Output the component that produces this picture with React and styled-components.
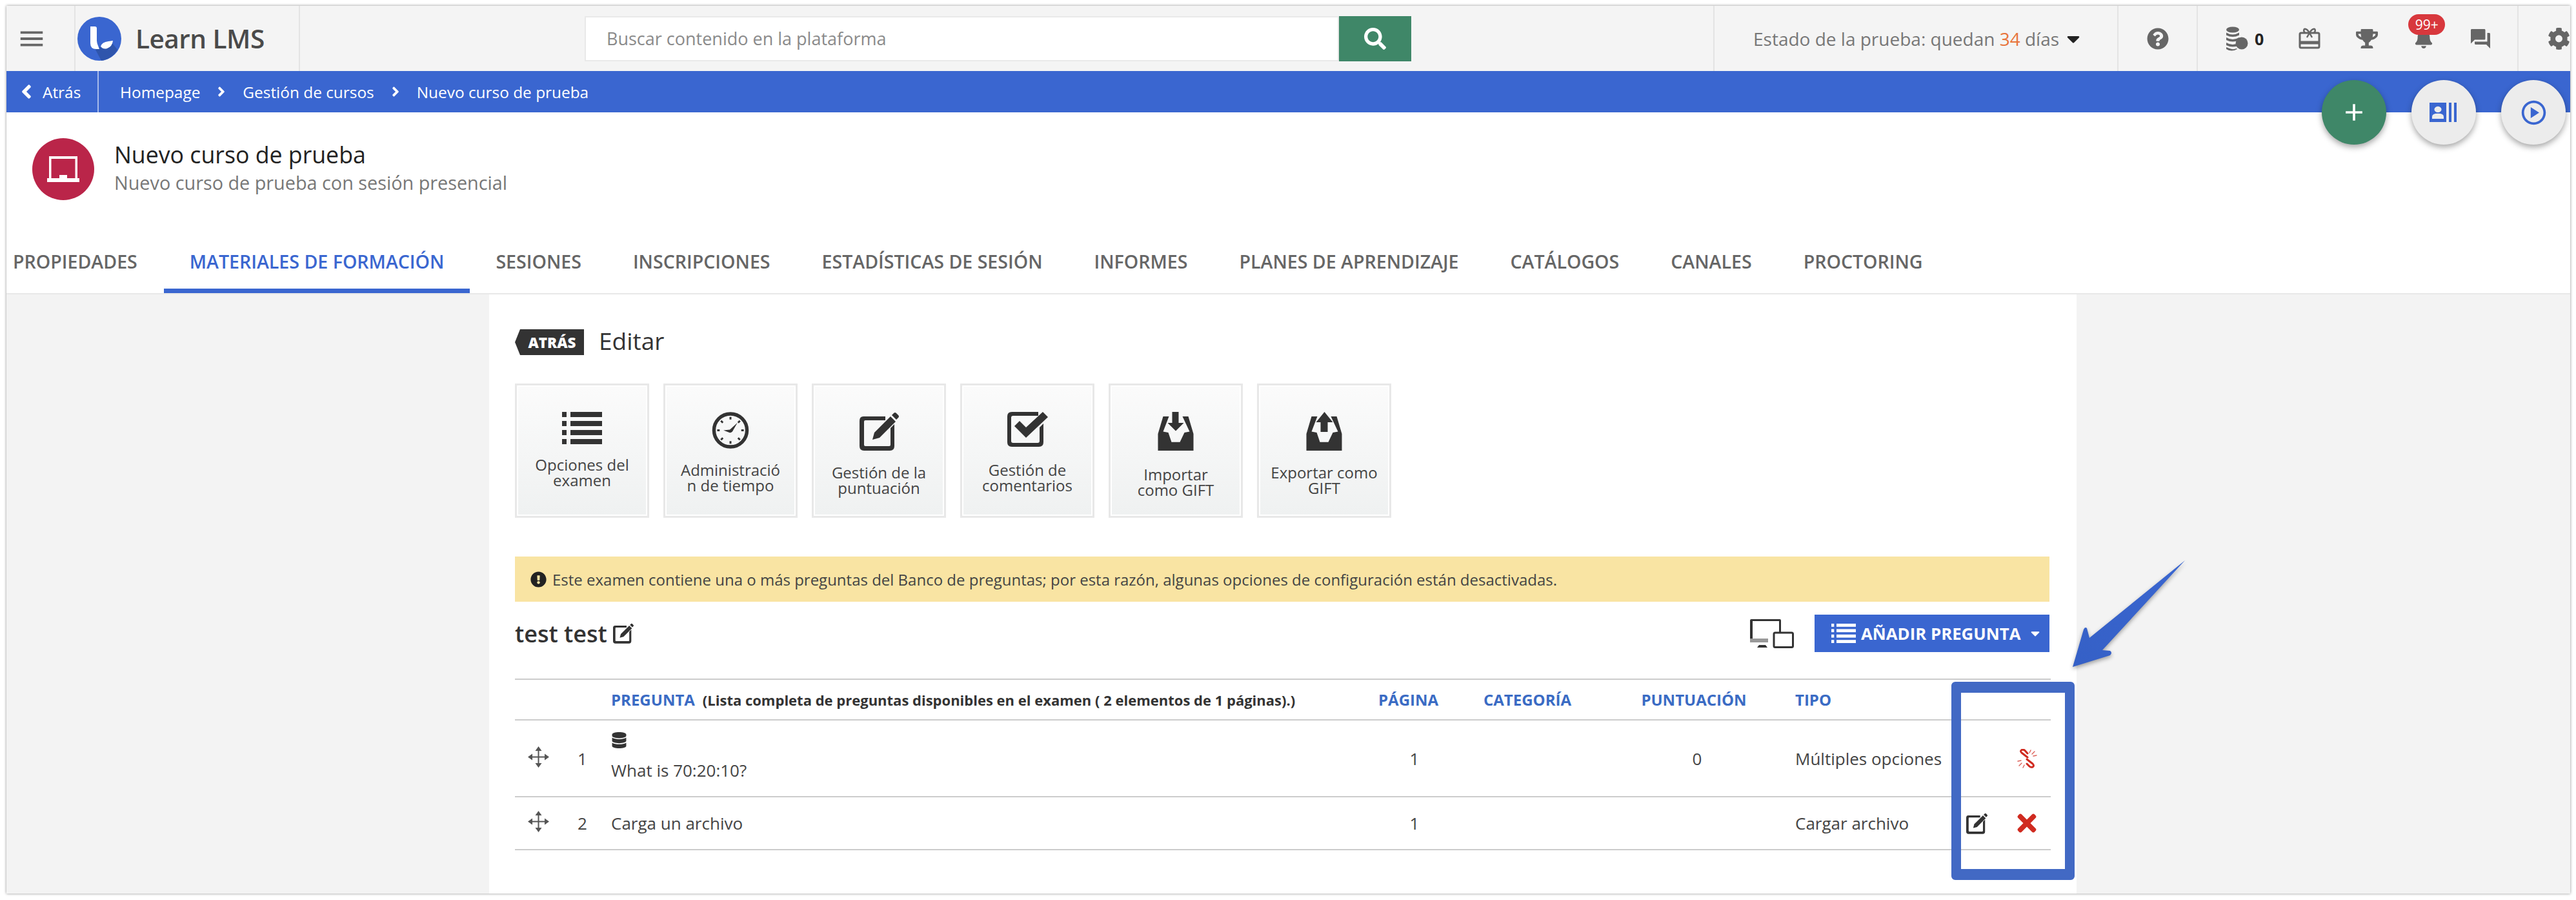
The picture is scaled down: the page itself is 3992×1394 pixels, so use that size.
import React from 'react';
import styled, { createGlobalStyle } from 'styled-components';
import {
  FaAngleLeft, FaAngleRight, FaBell, FaCaretDown, FaCog, FaDatabase,
  FaExclamationCircle, FaQuestionCircle, FaSearch, FaTimes, FaTrophy,
} from 'react-icons/fa';
import { MdAdd, MdForum, MdMenu, MdOutlinePlayCircle } from 'react-icons/md';

const GlobalStyle = createGlobalStyle`
  html, body { margin: 0; padding: 0; background: #fff; }
  body { font-family: "Open Sans", "Liberation Sans", sans-serif; color: #444; }
  * { box-sizing: border-box; }
`;

const Page = styled.div`
  width: 3992px;
  height: 1394px;
  padding: 9px 9px 10px 10px;
  background: #fff;
`;
const Frame = styled.div`
  position: relative;
  height: 100%;
  display: flex;
  flex-direction: column;
  box-shadow: 0 0 4px rgba(0, 0, 0, .45);
  overflow: hidden;
`;

/* top bar */
const TopBar = styled.header`
  height: 101px;
  display: flex;
  background: #f4f4f4;
  flex: none;
`;
const BarCell = styled.div`
  width: ${p => p.$w}px;
  display: flex;
  align-items: center;
  justify-content: ${p => p.$center ? 'center' : 'flex-start'};
  padding-left: ${p => p.$pad || 0}px;
  border-left: ${p => p.$noLine ? 'none' : '2px solid #e4e4e4'};
  color: #666;
  flex: none;
`;
const LogoName = styled.span`
  font-size: 40.5px;
  font-weight: 600;
  color: #4a4a4a;
  margin-left: 21px;
  letter-spacing: -.5px;
  white-space: nowrap;
`;
const SearchWrap = styled.div`
  flex: 1;
  display: flex;
  align-items: center;
  padding-left: 441px;
  border-left: 2px solid #e4e4e4;
`;
const SearchInput = styled.div`
  width: 1169px;
  height: 70px;
  background: #fff;
  border: 2px solid #e9e9e9;
  color: #8a8a8a;
  font-size: 27px;
  display: flex;
  align-items: center;
  padding-left: 32px;
`;
const SearchButton = styled.div`
  width: 112px;
  height: 70px;
  background: #3f8768;
  color: #fff;
  font-size: 34px;
  display: flex;
  align-items: center;
  justify-content: center;
`;
const TrialText = styled.span`
  font-size: 28px;
  color: #777;
  white-space: nowrap;
`;
const Days = styled.span`
  color: #e8743b;
`;
const Caret = styled.span`
  display: inline-flex;
  color: #222;
  font-size: 32px;
  margin-left: 6px;
`;
const ToolIcons = styled.div`
  width: 100%;
  display: flex;
  align-items: center;
`;
const Tool = styled.span`
  position: relative;
  width: ${p => p.$w}px;
  margin-left: ${p => p.$ml || 0}px;
  display: inline-flex;
  justify-content: center;
  font-size: ${p => p.$size || 34}px;
  color: #666;
  flex: none;
`;
const CoinCount = styled.span`
  font-size: 25px;
  font-weight: 700;
  color: #222;
  margin-left: 10px;
`;
const Badge = styled.span`
  position: absolute;
  left: -9px;
  top: -23px;
  width: 57px;
  height: 32px;
  border-radius: 16px;
  background: #d8383d;
  color: #fff;
  font-size: 21px;
  line-height: 32px;
  text-align: center;
`;

/* breadcrumb */
const BlueBar = styled.nav`
  height: 64px;
  flex: none;
  background: #3a66d0;
  color: #fff;
  display: flex;
  align-items: center;
  font-size: 24.4px;
`;
const BackLink = styled.div`
  width: 143px;
  height: 100%;
  padding-left: 14px;
  display: flex;
  align-items: center;
  gap: 8px;
  border-right: 2px solid rgba(255, 255, 255, .55);
  svg { font-size: 34px; }
`;
const Crumbs = styled.div`
  display: flex;
  align-items: center;
  padding-left: 33px;
  gap: 21px;
  svg { font-size: 24px; }
`;

const FabRow = styled.div`
  position: absolute;
  right: 7px;
  top: 115px;
  display: flex;
  gap: 39px;
`;
const Fab = styled.div`
  width: 100px;
  height: 100px;
  border-radius: 50%;
  background: ${p => p.$green ? '#3f8768' : '#ececec'};
  color: ${p => p.$green ? '#fff' : '#3a66d0'};
  display: flex;
  align-items: center;
  justify-content: center;
  font-size: ${p => p.$size || 44}px;
  box-shadow: 0 4px 10px rgba(0, 0, 0, .35);
`;

/* course header */
const CourseHead = styled.div`
  height: 182px;
  flex: none;
  padding: 40px 0 0 40px;
  display: flex;
  align-items: flex-start;
  gap: 31px;
  background: #fff;
`;
const CourseBadge = styled.div`
  width: 96px;
  height: 96px;
  border-radius: 50%;
  background: #ba2549;
  display: flex;
  align-items: center;
  justify-content: center;
`;
const CourseTitle = styled.div`
  font-size: 35.7px;
  line-height: 48px;
  color: #222;
  margin-top: 1px;
`;
const CourseSub = styled.div`
  font-size: 28.8px;
  line-height: 40px;
  color: #777;
`;

const Tabs = styled.div`
  height: 98px;
  flex: none;
  display: flex;
  border-bottom: 2px solid #e8e8e8;
  box-sizing: content-box;
`;
const Tab = styled.div`
  height: 98px;
  padding: 5px ${p => p.$first ? '41px 0 10px' : '40px 0'};
  display: flex;
  align-items: center;
  font-size: 28.55px;
  font-weight: 600;
  white-space: nowrap;
  color: ${p => p.$active ? '#3a66d0' : '#666'};
  border-bottom: 7px solid ${p => p.$active ? '#3a66d0' : 'transparent'};
`;

/* body */
const Body = styled.div`
  flex: 1;
  display: flex;
  justify-content: flex-start;
  background: #f3f3f3;
  padding-left: 748px;
`;
const Panel = styled.main`
  position: relative;
  width: 2460px;
  padding: 54px 40px 0;
  background: #fff;
`;
const EditHead = styled.div`
  height: 40px;
  display: flex;
  align-items: center;
  gap: 23px;
`;
const BackTag = styled.span`
  width: 107px;
  height: 40px;
  background: #333;
  color: #fff;
  font-size: 22.5px;
  font-weight: 800;
  display: flex;
  align-items: center;
  justify-content: center;
  padding-left: 8px;
  clip-path: polygon(8px 0, 100% 0, 100% 100%, 8px 100%, 0 50%);
`;
const EditTitle = styled.span`
  font-size: 37px;
  line-height: 40px;
  margin-top: -5px;
  color: #333;
`;
const Cards = styled.div`
  margin-top: 44px;
  display: flex;
  gap: 22px;
`;
const Card = styled.div`
  width: 208px;
  height: 208px;
  padding-top: 41px;
  border: 3px solid #e8e8e8;
  box-shadow: inset 0 0 0 2px #fff;
  background: linear-gradient(#fbfbfb, #eff1f1);
  display: flex;
  flex-direction: column;
  align-items: center;
`;
const CardLabel = styled.div`
  margin-top: ${p => p.$mt || 20}px;
  font-size: 24px;
  line-height: 24px;
  color: #444;
  text-align: center;
  white-space: pre-line;
`;
const IconSlot = styled.div`
  height: ${p => p.$h}px;
  color: #333;
  display: flex;
  font-size: ${p => p.$h}px;
`;
const Alert = styled.div`
  margin: 60px 2px 0 0;
  height: 70px;
  background: #f9e4a3;
  padding-left: 24px;
  display: flex;
  align-items: center;
  gap: 9px;
  font-size: 24px;
  color: #444;
  white-space: nowrap;
  svg { font-size: 25px; color: #222; }
`;
const Toolbar = styled.div`
  margin: 20px 2px 0 0;
  height: 58px;
  display: flex;
  align-items: center;
`;
const ExamName = styled.span`
  font-size: 36px;
  font-weight: 600;
  color: #333;
`;
const EditSmall = styled.span`
  display: inline-flex;
  margin: 0 0 0 9px;
  color: #333;
`;
const DeviceWrap = styled.span`
  margin-left: auto;
  margin-right: 32px;
  display: inline-flex;
  color: #333;
`;
const AddButton = styled.div`
  width: 364px;
  height: 58px;
  background: #3a66d0;
  color: #fff;
  display: flex;
  align-items: center;
  padding-left: 26px;
  gap: 8px;
  font-size: 25.8px;
  font-weight: 700;
  white-space: nowrap;
`;
const CaretSmall = styled.span`
  display: inline-flex;
  margin-left: 3px;
  font-size: 22px;
`;

const TableWrap = styled.div`
  position: relative;
  margin-top: 41px;
`;
const Table = styled.table`
  width: 2380px;
  table-layout: fixed;
  border-collapse: collapse;
  color: #444;
`;
const HeadCell = styled.th`
  height: 63px;
  padding: 0 ${p => p.$padRight || 0}px 0 ${p => p.$pad || 0}px;
  border-top: 2px solid #ccc;
  border-bottom: 2px solid #ccc;
  text-align: ${p => p.$center ? 'center' : 'left'};
  color: #3a6bc4;
  font-size: 24px;
  font-weight: 700;
  white-space: nowrap;
`;
const HeadNote = styled.span`
  color: #333;
  font-size: 22px;
  margin-left: 12px;
`;
const Row = styled.tr`
  height: ${p => p.$h}px;
  border-bottom: 2px solid #ccc;
`;
const Cell = styled.td`
  padding: 0 0 0 ${p => p.$pad || 0}px;
  text-align: ${p => p.$center ? 'center' : 'left'};
  color: #444;
  font-size: 26px;
  vertical-align: middle;
`;
const DragCell = styled.span`
  display: inline-flex;
  margin: 3px 0 0 20px;
  color: #555;
`;
const QuestionBlock = styled.div`
  padding-bottom: 8px;
  line-height: 28px;
`;
const DbMark = styled.div`
  height: 26px;
  margin-bottom: 19px;
  display: flex;
  color: #333;
  font-size: 25px;
`;
const Actions = styled.div`
  display: flex;
  justify-content: flex-end;
  align-items: center;
  gap: 40px;
  padding-right: ${p => p.$right || 16}px;
`;
const ActionIcon = styled.span`
  display: inline-flex;
  color: ${p => p.$red ? '#d02b20' : '#333'};
  font-size: ${p => p.$size || 32}px;
`;

/* annotation overlays */
const Highlight = styled.div`
  position: absolute;
  left: 2226px;
  top: 5px;
  width: 191px;
  height: 307px;
  border: solid #4269c4;
  border-width: 17px 15px;
  border-radius: 6px;
  pointer-events: none;
`;
const ArrowMark = styled.svg`
  position: absolute;
  left: 2400px;
  top: -190px;
  width: 200px;
  height: 180px;
  overflow: visible;
`;

const Logo = () => (
  <svg width="70" height="70" viewBox="0 0 70 70">
    <circle cx="35" cy="35" r="34" fill="#3a66d0" />
    <path d="M29 52 L52 38 L63 52 A34 34 0 0 1 38 69 Z" fill="#2f55ac" />
    <path d="M21 16 h7 q3 0 3 3 v19 q0 3 2 8 l2 5 h-5 q-9 0-9-9 V16z" fill="#fff" />
    <path d="M37 47 q2-7 12-8 l7-1 q-1 9-9 12 q-6 2-10-3z" fill="#fff" />
  </svg>
);

const Screen = () => (
  <svg width="50" height="40" viewBox="0 0 50 40" fill="#fff">
    <path d="M3 0 h44 v34 h-3.5 V4 H6.5 v30 H3z" />
    <path d="M19 29 h12 v5 h19 v6 H0 v-6 h19z" />
  </svg>
);

const CoinsIcon = () => (
  <svg width="36" height="38" viewBox="0 0 36 38" fill="currentColor">
    <ellipse cx="12" cy="5" rx="10" ry="4.5" />
    <path d="M2 9.5 q10 6 20 0 v4 q-10 5-20 0z" />
    <path d="M2 17 q10 6 20 0 v4 q-10 5-20 0z" />
    <path d="M2 25 q10 6 20 0 v4 q-10 5-20 0z" />
    <path d="M2 32 q10 5 16 2 l1 1 q-9 5-17 0z" />
    <circle cx="26" cy="26" r="9.5" />
  </svg>
);

const GiftIcon = () => (
  <svg width="34" height="33" viewBox="0 0 34 33" fill="none" stroke="currentColor">
    <rect x="2" y="8" width="30" height="23" rx="2" strokeWidth="3" />
    <path d="M2 23 h30" strokeWidth="5" />
    <path d="M17 8 q-4-7-8-6 q-2 3 1 6 M17 8 q4-7 8-6 q2 3-1 6" strokeWidth="2.5" />
    <path d="M17 8 l-4 7 M17 8 l4 7" strokeWidth="2.5" />
  </svg>
);

const ContactsIcon = () => (
  <svg width="44" height="30" viewBox="0 0 44 36" preserveAspectRatio="none" fill="currentColor">
    <path d="M0 0 h26 v36 H0z M13 7 a5.5 5.5 0 1 0 .01 0z M4 30 h18 v-4 q0-6-9-6 t-9 6z" fillRule="evenodd" />
    <path d="M30 0 h4 v36 h-4z M38 0 h4 v36 h-4z" />
  </svg>
);

const ListIcon = ({ w, h }) => (
  <svg width={w} height={h} viewBox="0 0 62 50" preserveAspectRatio="none" fill="currentColor">
    {[0, 14, 28, 42].map(y => (
      <g key={y}>
        <rect x="0" y={y} width="7" height="8" />
        <rect x="13" y={y} width="49" height="8" />
      </g>
    ))}
  </svg>
);

const ClockIcon = () => (
  <svg width="58" height="57" viewBox="0 0 58 58" fill="none" stroke="currentColor">
    <circle cx="29" cy="29" r="26" strokeWidth="5.5" />
    <path d="M29 8v4 M29 46v4 M8 29h4 M46 29h4 M14 14l3 3 M44 14l-3 3 M14 44l3-3 M44 44l-3-3" strokeWidth="3" />
    <path d="M18 29 l10-1 l12-11 l-8 14 q-3 3-6 1z" fill="currentColor" stroke="none" />
  </svg>
);

const EditIcon = ({ w = 61, h = 60 }) => (
  <svg width={w} height={h} viewBox="0 0 61 60" fill="currentColor">
    <path d="M6 6 h34 v6 H9 q-2 0-2 2 v36 q0 2 2 2 h37 q2 0 2-2 V24 l6-6 v34 q0 7-7 7 H7 q-7 0-7-7 V13 q0-7 6-7z" transform="translate(0 1)" />
    <path d="M20 43 l3-11 L48 7 l8 8 L31 40z" />
    <path d="M50 5 l3-3 q2-2 4 0 l3 3 q2 2 0 4 l-3 3z" />
  </svg>
);

const CheckIcon = () => (
  <svg width="63" height="54" viewBox="0 0 63 54" fill="currentColor">
    <path d="M7 0 h41 v6 H9 q-3 0-3 3 v36 q0 3 3 3 h38 q3 0 3-3 V24 l6-6 v29 q0 7-7 7 H7 q-7 0-7-7 V7 q0-7 7-7z" />
    <path d="M11 22 l8-8 l10 10 L55 0 l8 8 L29 40z" />
  </svg>
);

const TrayIcon = ({ up }) => (
  <svg width="56" height="60" viewBox="0 0 55 60" fill="currentColor">
    <path d="M8 7 h9 L8 30.5 l8 1.5 l5 14.7 h13 l7-14.7 l8-1.5 L38 7 h9 l8 27 v26 H0 V34z" />
    {up
      ? <path d="M28 0 L41 16 h-8 v15 h-11 V16 h-7z" />
      : <path d="M22 0 h10 v17 h8 L27.5 29.5 L15 17 h7z" />}
  </svg>
);

const DevicesIcon = () => (
  <svg width="68" height="45" viewBox="0 0 68 45">
    <path d="M2 0 h44 q2 0 2 2 v20 h-3 V3 H4 v27 h24 v6 H2 q-2 0-2-2 V2 q0-2 2-2z" fill="currentColor" />
    <path d="M0 30 h28 v6 H0z" fill="#999" />
    <path d="M14 40 h10 l3 4 H11z" fill="currentColor" />
    <rect x="37" y="21" width="29.5" height="22.5" rx="2" fill="#fff" stroke="currentColor" strokeWidth="3" />
  </svg>
);

const DragIcon = () => (
  <svg width="33" height="33" viewBox="0 0 33 33" fill="currentColor">
    <path d="M15.5 4 h2 v25 h-2z M4 15.5 h25 v2 H4z" />
    <path d="M16.5 0 l5 7 h-10z M16.5 33 l-5-7 h10z M0 16.5 l7-5 v10z M33 16.5 l-7 5 v-10z" />
  </svg>
);

const BrokenLink = () => (
  <svg width="31" height="30" viewBox="0 0 31 30" fill="none" stroke="currentColor" strokeLinecap="round">
    <path d="M16 13 L7 6 q-3-3 0-4.5 q3-1 5 1 L16 7" strokeWidth="3" />
    <path d="M15 16 l9 7 q3 3 0 5 q-3 1-5-1 l-4-4" strokeWidth="3" />
    <path d="M21 2 l-2 4 M27 4 l-4 4 M30 10 l-5 1 M1 19 l5-1 M3 26 l4-4 M9 29 l2-4" strokeWidth="1.4" opacity=".75" />
  </svg>
);

const cards = [
  { label: 'Opciones del\nexamen', h: 50, mt: 20, icon: <ListIcon w={62} h={50} /> },
  { label: 'Administració\nn de tiempo', h: 57, mt: 21, icon: <ClockIcon /> },
  { label: 'Gestión de la\npuntuación', h: 60, mt: 22, icon: <EditIcon /> },
  { label: 'Gestión de\ncomentarios', h: 54, mt: 24, icon: <CheckIcon /> },
  { label: 'Importar\ncomo GIFT', h: 60, mt: 25, icon: <TrayIcon /> },
  { label: 'Exportar como\nGIFT', h: 62, mt: 20, icon: <TrayIcon up /> },
];

const tabs = ['MATERIALES DE FORMACIÓN', 'SESIONES', 'INSCRIPCIONES', 'ESTADÍSTICAS DE SESIÓN', 'INFORMES', 'PLANES DE APRENDIZAJE', 'CATÁLOGOS', 'CANALES', 'PROCTORING'];

export default function App() {
  return (
    <Page>
      <GlobalStyle />
      <Frame>
        <TopBar>
          <BarCell $w={105} $pad={16} $noLine><MdMenu size={46} /></BarCell>
          <BarCell $w={348} $pad={2}><Logo /><LogoName>Learn LMS</LogoName></BarCell>
          <SearchWrap>
            <SearchInput>Buscar contenido en la plataforma</SearchInput>
            <SearchButton><FaSearch /></SearchButton>
          </SearchWrap>
          <BarCell $w={626} $pad={60}>
            <TrialText>Estado de la prueba: quedan <Days>34</Days> días</TrialText>
            <Caret><FaCaretDown /></Caret>
          </BarCell>
          <BarCell $w={123} $center><FaQuestionCircle size={34} /></BarCell>
          <BarCell $w={497}>
            <ToolIcons>
              <Tool $w={36} $ml={42}><CoinsIcon /></Tool>
              <CoinCount>0</CoinCount>
              <Tool $w={34} $ml={54}><GiftIcon /></Tool>
              <Tool $w={38} $ml={53} $size={34}><FaTrophy /></Tool>
              <Tool $w={30} $ml={54} $size={30}><FaBell /><Badge>99+</Badge></Tool>
              <Tool $w={36} $ml={55} $size={36}><MdForum /></Tool>
            </ToolIcons>
          </BarCell>
          <BarCell $w={82} $pad={45}><FaCog size={36} /></BarCell>
        </TopBar>

        <BlueBar>
          <BackLink><FaAngleLeft />Atrás</BackLink>
          <Crumbs>
            <span>Homepage</span><FaAngleRight />
            <span>Gestión de cursos</span><FaAngleRight />
            <span>Nuevo curso de prueba</span>
          </Crumbs>
        </BlueBar>

        <FabRow>
          <Fab $green><MdAdd /></Fab>
          <Fab><ContactsIcon /></Fab>
          <Fab $size={45}><MdOutlinePlayCircle /></Fab>
        </FabRow>

        <CourseHead>
          <CourseBadge><Screen /></CourseBadge>
          <div>
            <CourseTitle>Nuevo curso de prueba</CourseTitle>
            <CourseSub>Nuevo curso de prueba con sesión presencial</CourseSub>
          </div>
        </CourseHead>

        <Tabs>
          <Tab $first>PROPIEDADES</Tab>
          {tabs.map((t, i) => <Tab key={t} $active={i === 0}>{t}</Tab>)}
        </Tabs>

        <Body>
          <Panel>
            <EditHead>
              <BackTag>ATRÁS</BackTag>
              <EditTitle>Editar</EditTitle>
            </EditHead>

            <Cards>
              {cards.map(c => (
                <Card key={c.label}>
                  <IconSlot $h={c.h}>{c.icon}</IconSlot>
                  <CardLabel $mt={c.mt}>{c.label}</CardLabel>
                </Card>
              ))}
            </Cards>

            <Alert>
              <FaExclamationCircle />
              Este examen contiene una o más preguntas del Banco de preguntas; por esta razón, algunas opciones de configuración están desactivadas.
            </Alert>

            <Toolbar>
              <ExamName>test test</ExamName>
              <EditSmall><EditIcon w={32} h={32} /></EditSmall>
              <DeviceWrap><DevicesIcon /></DeviceWrap>
              <AddButton><ListIcon w={38} h={30} />AÑADIR PREGUNTA<CaretSmall><FaCaretDown /></CaretSmall></AddButton>
            </Toolbar>

            <TableWrap>
              <Table>
                <colgroup>
                  <col width="72" /><col width="65" /><col width="1185" /><col width="144" />
                  <col width="236" /><col width="260" /><col width="264" /><col width="154" />
                </colgroup>
                <thead>
                  <tr>
                    <HeadCell /><HeadCell />
                    <HeadCell $pad={12}>PREGUNTA<HeadNote>(Lista completa de preguntas disponibles en el examen ( 2 elementos de 1 páginas).)</HeadNote></HeadCell>
                    <HeadCell $pad={16}>PÁGINA</HeadCell>
                    <HeadCell $pad={35}>CATEGORÍA</HeadCell>
                    <HeadCell $center $padRight={10}>PUNTUACIÓN</HeadCell>
                    <HeadCell $pad={22}>TIPO</HeadCell>
                    <HeadCell />
                  </tr>
                </thead>
                <tbody>
                  <Row $h={119}>
                    <Cell><DragCell><DragIcon /></DragCell></Cell>
                    <Cell $center>1</Cell>
                    <Cell $pad={12}>
                      <QuestionBlock>
                        <DbMark><FaDatabase /></DbMark>
                        What is 70:20:10?
                      </QuestionBlock>
                    </Cell>
                    <Cell $center>1</Cell>
                    <Cell />
                    <Cell $center>0</Cell>
                    <Cell $pad={22}>Múltiples opciones</Cell>
                    <Cell><Actions $right={21}><ActionIcon $red><BrokenLink /></ActionIcon></Actions></Cell>
                  </Row>
                  <Row $h={82}>
                    <Cell><DragCell><DragIcon /></DragCell></Cell>
                    <Cell $center>2</Cell>
                    <Cell $pad={12}>Carga un archivo</Cell>
                    <Cell $center>1</Cell>
                    <Cell />
                    <Cell />
                    <Cell $pad={22}>Cargar archivo</Cell>
                    <Cell>
                      <Actions>
                        <ActionIcon><EditIcon w={33} h={33} /></ActionIcon>
                        <ActionIcon $red $size={42}><FaTimes /></ActionIcon>
                      </Actions>
                    </Cell>
                  </Row>
                </tbody>
              </Table>
              <Highlight />
              <ArrowMark viewBox="0 0 200 180">
                <defs>
                  <linearGradient id="arrowFill" x1="1" y1="0" x2="0" y2="1">
                    <stop offset="0" stopColor="#3a66d0" />
                    <stop offset="1" stopColor="#3560c6" />
                  </linearGradient>
                </defs>
                <path d="M188 7 L40 127 L36 112 Q33 109 31 114 L14 172 L72 154 Q76 150 72 147 L60 146 Z" fill="url(#arrowFill)" style={{ filter: 'drop-shadow(0 3px 3px rgba(0,0,0,.35))' }} />
              </ArrowMark>
            </TableWrap>
          </Panel>
        </Body>
      </Frame>
    </Page>
  );
}
